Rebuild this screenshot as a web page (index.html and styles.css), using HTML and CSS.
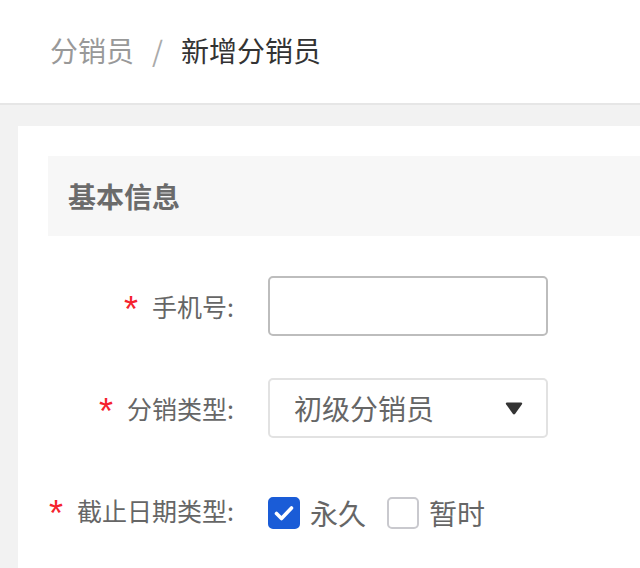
FILE: index.html
```html
<!DOCTYPE html>
<html lang="zh-CN">
<head>
  <meta charset="UTF-8" />
  <meta name="viewport" content="width=device-width, initial-scale=1.0"/>
  <title>新增分销员</title>
  <link rel="stylesheet" href="styles.css">
</head>
<body>
  <header class="topbar">
    <nav class="crumbs">
      <span class="crumb">分销员</span>
      <span class="sep">/</span>
      <span class="crumb current">新增分销员</span>
    </nav>
  </header>

  <main class="page">
    <section class="card">
      <h3 class="section-title">基本信息</h3>

      <form class="form">
        <div class="row">
          <label class="label"><span class="req">*</span>手机号:</label>
          <input class="field" type="tel" />
        </div>

        <div class="row">
          <label class="label"><span class="req">*</span>分销类型:</label>
          <div class="field select">
            <span>初级分销员</span>
            <svg class="caret" width="18" height="13" viewBox="0 0 18 13">
              <path d="M2.2 0.5 H15.8 Q18 0.5 16.8 2.4 L10.2 11.8 Q9 13.2 7.8 11.8 L1.2 2.4 Q0 0.5 2.2 0.5 Z" fill="#333"/>
            </svg>
          </div>
        </div>

        <div class="row">
          <label class="label"><span class="req">*</span>截止日期类型:</label>
          <div class="checks">
            <label class="check">
              <span class="box on">
                <svg width="32" height="32" viewBox="0 0 32 32">
                  <polyline points="8.5,16.5 13.5,21.5 23.5,11" fill="none" stroke="#fff" stroke-width="3.6" stroke-linecap="round" stroke-linejoin="round"/>
                </svg>
              </span>
              永久
            </label>
            <label class="check">
              <span class="box"></span>
              暂时
            </label>
          </div>
        </div>
      </form>
    </section>
  </main>
</body>
</html>
```

FILE: styles.css
```css
body {
  margin: 0;
  font-family: "Noto Sans CJK SC", "Noto Sans", sans-serif;
  background: #f2f2f2;
  overflow: hidden;
  height: 568px;
}

.topbar {
  background: white;
  height: 105px;
  border-bottom: 2px solid #e6e6e6;
  display: flex;
  align-items: center;
  padding: 0 0 4px 50px;
  box-sizing: border-box;
}

.crumbs {
  display: flex;
  align-items: center;
  font-size: 28px;
  color: #999;
}

.sep {
  margin: 0 18px;
  color: #aaa;
}

.crumb.current {
  color: #333;
}

.page {
  padding: 21px 0 0 18px;
}

.card {
  background: white;
  width: 900px;
  height: 600px;
  padding: 30px;
}

.section-title {
  margin: 0;
  height: 80px;
  line-height: 80px;
  padding-left: 20px;
  background: #f7f7f7;
  font-size: 28px;
  font-weight: bold;
  color: #6b6b6b;
}

.form {
  margin-top: 40px;
  display: flex;
  flex-direction: column;
  gap: 42px;
}

.row {
  display: flex;
  align-items: center;
  height: 60px;
}

.label {
  width: 186px;
  margin-right: 34px;
  display: flex;
  justify-content: flex-end;
  align-items: center;
  font-size: 25px;
  color: #666;
  white-space: nowrap;
}

.req {
  font-family: "Liberation Sans", Arial, sans-serif;
  font-size: 36px;
  line-height: 1;
  color: #f5222d;
  margin: 8px 14px 0 0;
}

.field {
  box-sizing: border-box;
  width: 280px;
  height: 60px;
  border: 2px solid #bdbdbd;
  border-radius: 5px;
  background: white;
  font-family: inherit;
  font-size: 28px;
  padding: 0 24px;
}

.select {
  display: flex;
  align-items: center;
  justify-content: space-between;
  border-color: #e2e2e2;
  color: #666;
  padding-right: 23px;
}

.checks {
  display: flex;
  align-items: center;
  margin-top: 6px;
}

.check {
  display: flex;
  align-items: center;
  font-size: 28px;
  color: #666;
  margin-right: 21px;
}

.box {
  box-sizing: border-box;
  width: 32px;
  height: 32px;
  border: 2px solid #c9c9ce;
  border-radius: 5px;
  margin-right: 10px;
  display: flex;
}

.box.on {
  background: #1a5cd7;
  border-color: #1a5cd7;
}

.box.on svg {
  margin: -2px;
}
```
